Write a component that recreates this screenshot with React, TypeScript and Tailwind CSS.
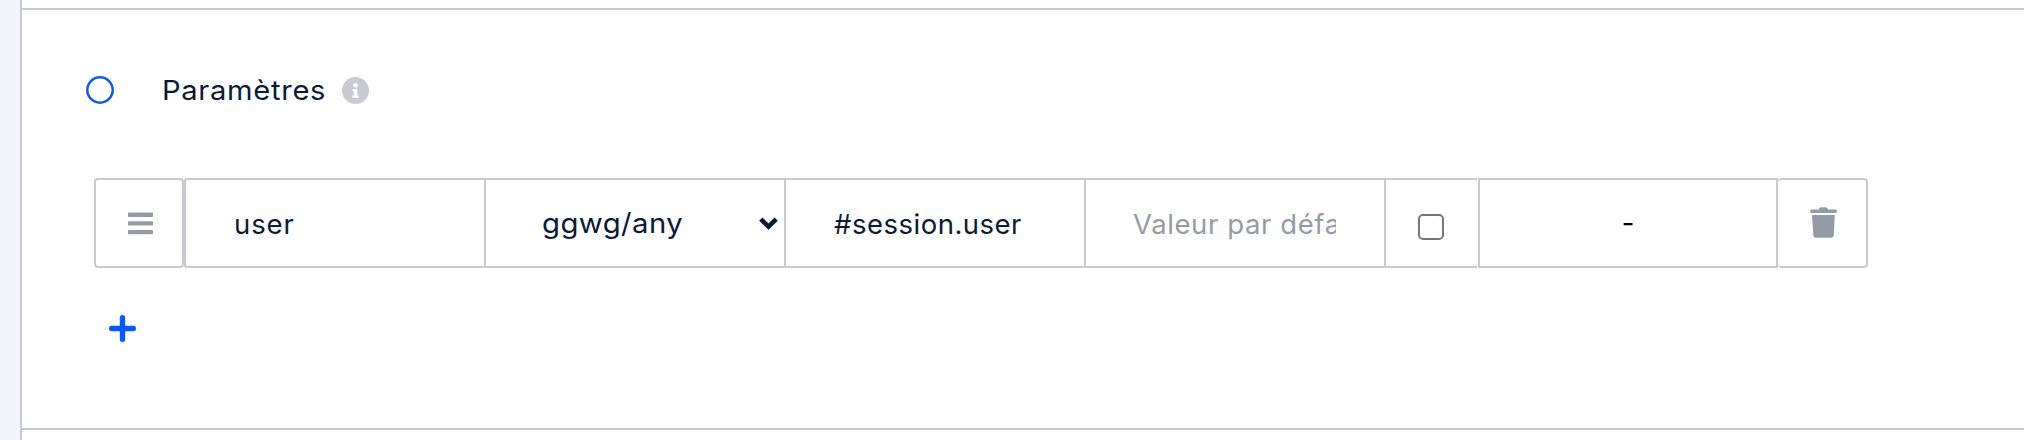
import React from "react";

function RingIcon() {
  return (
    <svg className="size-7 shrink-0" viewBox="0 0 28 28" fill="none">
      <circle cx="14" cy="14" r="12.7" stroke="#1259e8" strokeWidth="2.5" />
    </svg>
  );
}

function InfoIcon() {
  return (
    <svg className="ml-4 size-[27px] shrink-0" viewBox="0 0 27 27">
      <circle cx="13.5" cy="13.5" r="13.5" fill="#c9cad1" />
      <circle cx="13.5" cy="8.3" r="2.4" fill="#fff" />
      <path d="M10.6 12h4.7v6.6h1.5v2.2h-6.5v-2.2h1.5v-4.4h-1.2z" fill="#fff" />
    </svg>
  );
}

function BarsIcon() {
  return (
    <svg className="size-[25px]" viewBox="0 0 25 25" fill="#939ca6">
      <rect x="0" y="1.5" width="25" height="4.4" rx="0.7" />
      <rect x="0" y="10.2" width="25" height="4.4" rx="0.7" />
      <rect x="0" y="18.9" width="25" height="4.4" rx="0.7" />
    </svg>
  );
}

function TrashIcon() {
  return (
    <svg className="h-[31px] w-[27px]" viewBox="0 0 27 31" fill="#939ca6">
      <path d="M1 2.5H8.6L9.4 1Q9.9.3 10.8.3H16Q16.9.3 17.3 1L18.1 2.5H26Q26.7 2.5 26.7 3.2V5.2Q26.7 6 26 6H1Q.3 6 .3 5.2V3.2Q.3 2.5 1 2.5Z" />
      <path d="M2 8H24.8L23.8 28Q23.6 30.7 21 30.7H6Q3.5 30.7 3.3 28Z" />
    </svg>
  );
}

const field =
  "h-[90px] w-[300px] shrink-0 border-y-2 border-r-2 border-[#c9cacf] bg-white pt-0.5 pr-12 font-[Inter,sans-serif] text-[27.5px] text-[#0c1a35] outline-none placeholder:text-[#939ca6] placeholder:opacity-100";

export default function App() {
  return (
    <div className="flex h-[440px] w-full overflow-hidden bg-white font-[Inter,sans-serif] text-[27.5px] text-[#0c1a35]">
      <aside className="w-[22px] shrink-0 border-r-2 border-[#c9cacf] bg-[#f2f4f9]" />
      <main className="flex min-w-0 grow flex-col">
        <div className="h-2.5 shrink-0 border-b-2 border-[#c9cacf]" />
        <section className="h-[420px] shrink-0 border-b-2 border-[#c9cacf] pl-16">
          <header className="flex h-40 items-center">
            <div className="flex h-10 items-center">
              <RingIcon />
              <span className="ml-12 w-[164px] origin-left scale-x-[1.06] whitespace-nowrap pt-px tracking-[0.65px]">
                Paramètres
              </span>
              <InfoIcon />
            </div>
          </header>
          <div className="ml-2 mt-2 flex h-[90px]">
            <button className="flex w-[90px] items-center justify-center rounded-[4px] border-2 border-[#c9cacf] pl-0.5">
              <BarsIcon />
            </button>
            <input className={`${field} !w-[302px] rounded-l-[3px] border-l-2 pl-12 tracking-[0.9px]`} defaultValue="user" />
            <div className={`${field} flex items-center justify-between !pr-1.5 pl-14 tracking-[0.4px]`}>
              <span className="origin-left scale-x-[1.065]">ggwg/any</span>
              <svg className="mb-0.5 h-[13px] w-[19px]" viewBox="0 0 19 13" fill="none">
                <path d="M1.8 2.2L9.5 9.6L17.2 2.2" stroke="#0c1a35" strokeWidth="4.6" />
              </svg>
            </div>
            <input className={`${field} pl-12 tracking-[0.5px]`} defaultValue="#session.user" />
            <input className={`${field} pl-[47px] tracking-[0.6px]`} placeholder="Valeur par défaut" />
            <div className="mr-px flex w-[91px] items-center border-y-2 border-[#c9cacf] pl-8 pt-2">
              <input type="checkbox" className="size-[26px] appearance-none rounded-[5px] border-2 border-[#767676] bg-white" />
            </div>
            <div className="flex w-[300px] items-center justify-center border-2 border-[#c9cacf] pt-0.5 text-black">-</div>
            <button className="flex w-[90px] items-center justify-center rounded-[4px] border-y-2 border-r-2 border-[#c9cacf] pb-0.5 pl-0.5">
              <TrashIcon />
            </button>
          </div>
          <button className="ml-[22.5px] mt-[47px] block">
            <svg className="size-[27px]" viewBox="0 0 27 27">
              <path d="M13.5 2.7V24.3M2.7 13.5H24.3" stroke="#0759f8" strokeWidth="5.4" strokeLinecap="round" />
            </svg>
          </button>
        </section>
      </main>
    </div>
  );
}
